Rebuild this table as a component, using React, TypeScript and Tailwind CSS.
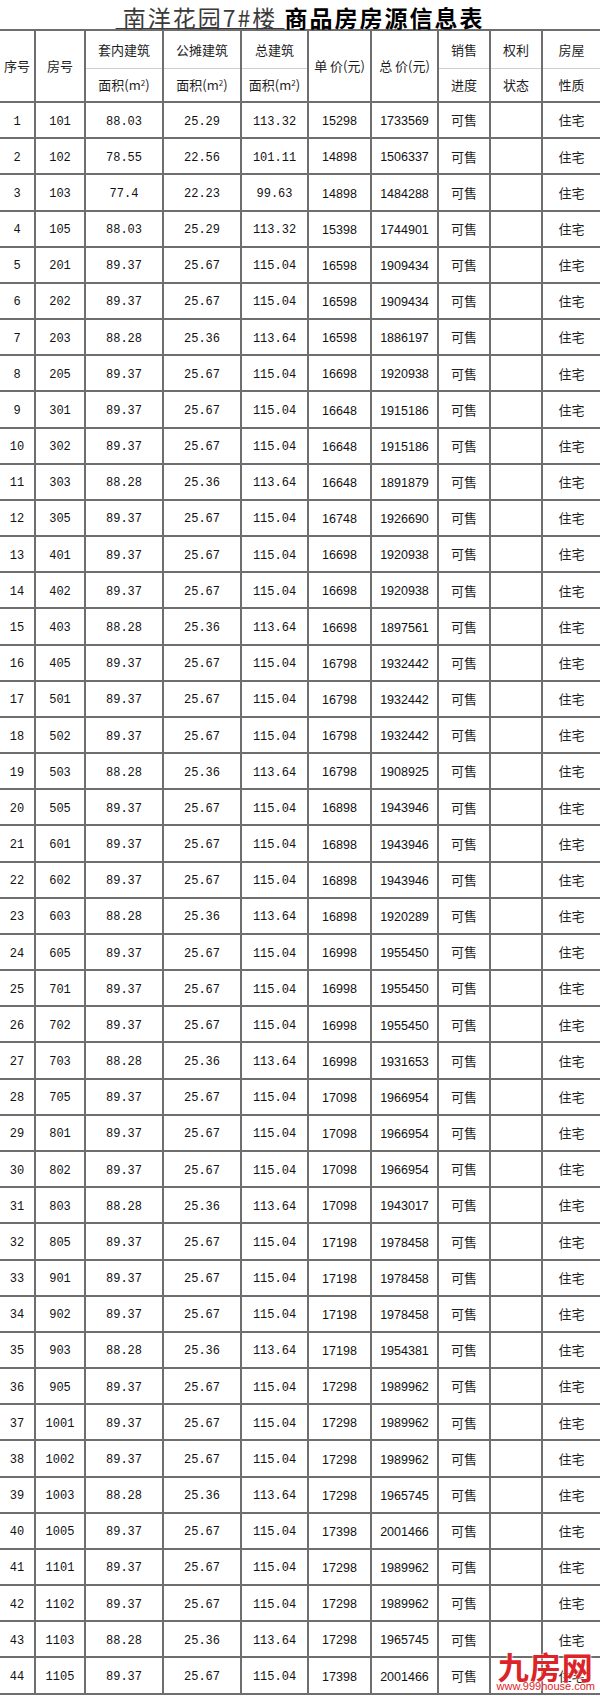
import React from 'react';

// 每行: 序号 房号 套内 公摊 总建筑 单价 总价
const rows: [number, string, string, string, string, string, string][] = [
  [1, '101', '88.03', '25.29', '113.32', '15298', '1733569'],
  [2, '102', '78.55', '22.56', '101.11', '14898', '1506337'],
  [3, '103', '77.4', '22.23', '99.63', '14898', '1484288'],
  [4, '105', '88.03', '25.29', '113.32', '15398', '1744901'],
  [5, '201', '89.37', '25.67', '115.04', '16598', '1909434'],
  [6, '202', '89.37', '25.67', '115.04', '16598', '1909434'],
  [7, '203', '88.28', '25.36', '113.64', '16598', '1886197'],
  [8, '205', '89.37', '25.67', '115.04', '16698', '1920938'],
  [9, '301', '89.37', '25.67', '115.04', '16648', '1915186'],
  [10, '302', '89.37', '25.67', '115.04', '16648', '1915186'],
  [11, '303', '88.28', '25.36', '113.64', '16648', '1891879'],
  [12, '305', '89.37', '25.67', '115.04', '16748', '1926690'],
  [13, '401', '89.37', '25.67', '115.04', '16698', '1920938'],
  [14, '402', '89.37', '25.67', '115.04', '16698', '1920938'],
  [15, '403', '88.28', '25.36', '113.64', '16698', '1897561'],
  [16, '405', '89.37', '25.67', '115.04', '16798', '1932442'],
  [17, '501', '89.37', '25.67', '115.04', '16798', '1932442'],
  [18, '502', '89.37', '25.67', '115.04', '16798', '1932442'],
  [19, '503', '88.28', '25.36', '113.64', '16798', '1908925'],
  [20, '505', '89.37', '25.67', '115.04', '16898', '1943946'],
  [21, '601', '89.37', '25.67', '115.04', '16898', '1943946'],
  [22, '602', '89.37', '25.67', '115.04', '16898', '1943946'],
  [23, '603', '88.28', '25.36', '113.64', '16898', '1920289'],
  [24, '605', '89.37', '25.67', '115.04', '16998', '1955450'],
  [25, '701', '89.37', '25.67', '115.04', '16998', '1955450'],
  [26, '702', '89.37', '25.67', '115.04', '16998', '1955450'],
  [27, '703', '88.28', '25.36', '113.64', '16998', '1931653'],
  [28, '705', '89.37', '25.67', '115.04', '17098', '1966954'],
  [29, '801', '89.37', '25.67', '115.04', '17098', '1966954'],
  [30, '802', '89.37', '25.67', '115.04', '17098', '1966954'],
  [31, '803', '88.28', '25.36', '113.64', '17098', '1943017'],
  [32, '805', '89.37', '25.67', '115.04', '17198', '1978458'],
  [33, '901', '89.37', '25.67', '115.04', '17198', '1978458'],
  [34, '902', '89.37', '25.67', '115.04', '17198', '1978458'],
  [35, '903', '88.28', '25.36', '113.64', '17198', '1954381'],
  [36, '905', '89.37', '25.67', '115.04', '17298', '1989962'],
  [37, '1001', '89.37', '25.67', '115.04', '17298', '1989962'],
  [38, '1002', '89.37', '25.67', '115.04', '17298', '1989962'],
  [39, '1003', '88.28', '25.36', '113.64', '17298', '1965745'],
  [40, '1005', '89.37', '25.67', '115.04', '17398', '2001466'],
  [41, '1101', '89.37', '25.67', '115.04', '17298', '1989962'],
  [42, '1102', '89.37', '25.67', '115.04', '17298', '1989962'],
  [43, '1103', '88.28', '25.36', '113.64', '17298', '1965745'],
  [44, '1105', '89.37', '25.67', '115.04', '17398', '2001466'],
];

const cols = 'grid grid-cols-[36px_50px_78px_78px_67px_63px_67px_52px_52px_57px]';
const cell = 'flex items-center justify-center border-r-2 border-b-2 border-[#6e6e6e]';
const last = 'flex items-center justify-center border-b-2 border-[#6e6e6e]';
const mono = "font-['Liberation_Mono',monospace] text-[12px] pt-[3px] text-[#111]";
const sans = "font-['Liberation_Sans',sans-serif] text-[12.5px] pt-[3px] text-[#111]";
const cjk = "font-['Noto_Sans_CJK_SC',sans-serif] text-[13px]";

const SplitHead = ({ top, bottom, isLast }: { top: string; bottom: React.ReactNode; isLast?: boolean }) => (
  <div className={`${isLast ? 'border-b-2' : 'border-r-2 border-b-2'} border-[#6e6e6e] flex flex-col`}>
    <div className="h-[38px] flex items-center justify-center border-b border-[#cfcfcf]">{top}</div>
    <div className="flex-1 flex items-center justify-center">{bottom}</div>
  </div>
);

const Area = () => (
  <span>
    面积(m<sup className="text-[8px]">2</sup>)
  </span>
);

export default function App() {
  return (
    <div className="w-[600px] h-[1696px] bg-white text-[#1e1e1e] overflow-hidden relative">
      {/* 标题 */}
      <div className="h-[31px] border-b-2 border-[#6e6e6e] flex items-start justify-center text-[23px] leading-[34px] tracking-[2px] font-['Noto_Sans_CJK_SC',sans-serif]">
        <span className="underline decoration-1 underline-offset-[1px] whitespace-pre text-[#3a3a3a] font-normal"> 南洋花园7#楼 </span>
        <span className="font-bold text-black whitespace-pre">商品房房源信息表</span>
      </div>

      {/* 表头 */}
      <div className={`${cols} h-[72px] ${cjk}`}>
        <div className={cell}>序号</div>
        <div className={cell}>房号</div>
        <SplitHead top="套内建筑" bottom={<Area />} />
        <SplitHead top="公摊建筑" bottom={<Area />} />
        <SplitHead top="总建筑" bottom={<Area />} />
        <div className={`${cell} whitespace-pre`}>单 价(元)</div>
        <div className={`${cell} whitespace-pre`}>总 价(元)</div>
        <SplitHead top="销售" bottom="进度" />
        <SplitHead top="权利" bottom="状态" />
        <SplitHead top="房屋" bottom="性质" isLast />
      </div>

      {/* 数据行 */}
      {rows.map((r) => (
        <div key={r[0]} className={`${cols} h-[36.18px]`}>
          <div className={`${cell} ${mono}`}>{r[0]}</div>
          <div className={`${cell} ${mono}`}>{r[1]}</div>
          <div className={`${cell} ${mono}`}>{r[2]}</div>
          <div className={`${cell} ${mono}`}>{r[3]}</div>
          <div className={`${cell} ${mono}`}>{r[4]}</div>
          <div className={`${cell} ${sans}`}>{r[5]}</div>
          <div className={`${cell} ${sans}`}>{r[6]}</div>
          <div className={`${cell} ${cjk}`}>可售</div>
          <div className={cell}></div>
          <div className={`${last} ${cjk}`}>住宅</div>
        </div>
      ))}

      {/* 水印 */}
      <div className="absolute right-[5px] bottom-[3px] flex flex-col items-center leading-none text-[#dc2428] [text-shadow:0_0_2px_#fff,0_0_2px_#fff]">
        <span className="font-['Noto_Sans_CJK_SC',sans-serif] font-bold text-[31px] tracking-[1px] leading-[28px]">九房网</span>
        <span className="font-['Liberation_Sans',sans-serif] text-[11px] leading-[13px]">www.999house.com</span>
      </div>
    </div>
  );
}
